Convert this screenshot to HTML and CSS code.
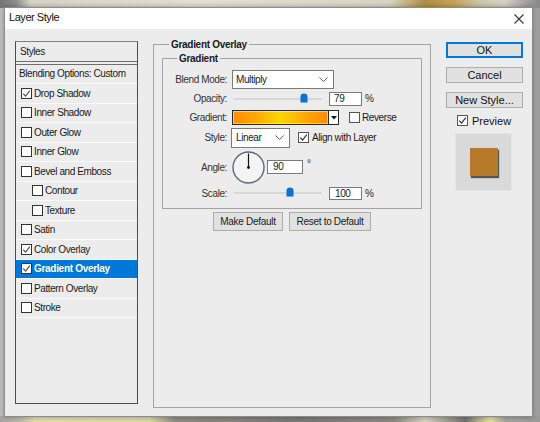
FILE: index.html
```html
<!DOCTYPE html>
<html>
<head>
<meta charset="utf-8">
<link rel="stylesheet" href="styles.css">
</head>
<body>
<div class="dialog">
  <div class="titlebar">
    <span class="title">Layer Style</span>
    <svg class="close" width="10" height="10" viewBox="0 0 10 10"><path d="M0.5 0.5 L9.5 9.5 M9.5 0.5 L0.5 9.5" stroke="#333" stroke-width="1.1" fill="none"/></svg>
  </div>
  <div class="body">
    <div class="styles-list">
      <div class="list-head">Styles</div>
      <div class="list-blend">Blending Options: Custom</div>
      <div class="list-item"><span class="cb"><svg width="9" height="9" viewBox="0 0 9 9"><polyline points="1.2,4.6 3.6,7 7.8,1.6" fill="none" stroke="#555" stroke-width="1.2"/></svg></span>Drop Shadow</div>
      <div class="list-item"><span class="cb"></span>Inner Shadow</div>
      <div class="list-item"><span class="cb"></span>Outer Glow</div>
      <div class="list-item"><span class="cb"></span>Inner Glow</div>
      <div class="list-item"><span class="cb"></span>Bevel and Emboss</div>
      <div class="list-item sub"><span class="cb"></span>Contour</div>
      <div class="list-item sub"><span class="cb"></span>Texture</div>
      <div class="list-item"><span class="cb"></span>Satin</div>
      <div class="list-item"><span class="cb"><svg width="9" height="9" viewBox="0 0 9 9"><polyline points="1.2,4.6 3.6,7 7.8,1.6" fill="none" stroke="#555" stroke-width="1.2"/></svg></span>Color Overlay</div>
      <div class="list-item selected"><span class="cb"><svg width="9" height="9" viewBox="0 0 9 9"><polyline points="1.2,4.6 3.6,7 7.8,1.6" fill="none" stroke="#555" stroke-width="1.2"/></svg></span>Gradient Overlay</div>
      <div class="list-item"><span class="cb"></span>Pattern Overlay</div>
      <div class="list-item"><span class="cb"></span>Stroke</div>
    </div>

    <fieldset class="group outer">
      <legend>Gradient Overlay</legend>
      <fieldset class="group inner">
        <legend>Gradient</legend>
        <div class="row r19">
          <span class="label">Blend Mode:</span>
          <div class="select blend-select"><span>Multiply</span><svg width="9" height="5" viewBox="0 0 9 5"><polyline points="0.5,0.5 4.5,4.5 8.5,0.5" fill="none" stroke="#666" stroke-width="1"/></svg></div>
        </div>
        <div class="row r19">
          <span class="label">Opacity:</span>
          <div class="slider"><div class="track"></div><svg class="thumb" style="left:68px" width="8" height="10" viewBox="0 0 8 10"><path d="M0.5 3.5 Q0.5 0.5 4 0.5 Q7.5 0.5 7.5 3.5 V9.5 H0.5 Z" fill="#0a73d3"/></svg></div>
          <div class="num">79</div>
          <span class="unit">%</span>
        </div>
        <div class="row r19">
          <span class="label">Gradient:</span>
          <div class="grad"></div>
          <div class="grad-arrow"><svg width="6" height="4" viewBox="0 0 6 4"><path d="M0 0 H6 L3 3.5 Z" fill="#111"/></svg></div>
          <span class="cb cb-reverse"></span>
          <span class="cb-text">Reverse</span>
        </div>
        <div class="row r21">
          <span class="label">Style:</span>
          <div class="select style-select"><span>Linear</span><svg width="9" height="5" viewBox="0 0 9 5"><polyline points="0.5,0.5 4.5,4.5 8.5,0.5" fill="none" stroke="#666" stroke-width="1"/></svg></div>
          <span class="cb cb-align"><svg width="9" height="9" viewBox="0 0 9 9"><polyline points="1.2,4.6 3.6,7 7.8,1.6" fill="none" stroke="#333" stroke-width="1.2"/></svg></span>
          <span class="cb-text">Align with Layer</span>
        </div>
        <div class="row r38">
          <span class="label">Angle:</span>
          <svg class="dial" width="33" height="33" viewBox="0 0 33 33"><circle cx="16.5" cy="16.5" r="15.5" fill="#f4f4f4" stroke="#5d6880" stroke-width="1.4"/><line x1="16.5" y1="16.5" x2="16.5" y2="2.5" stroke="#111" stroke-width="1.2"/><circle cx="16.5" cy="16.5" r="1.4" fill="#111"/></svg>
          <div class="num angle-num">90</div>
          <span class="deg">°</span>
        </div>
        <div class="row r14">
          <span class="label">Scale:</span>
          <div class="slider"><div class="track"></div><svg class="thumb" style="left:54px" width="8" height="10" viewBox="0 0 8 10"><path d="M0.5 3.5 Q0.5 0.5 4 0.5 Q7.5 0.5 7.5 3.5 V9.5 H0.5 Z" fill="#0a73d3"/></svg></div>
          <div class="num scale-num">100</div>
          <span class="unit">%</span>
        </div>
      </fieldset>
      <div class="defaults">
        <div class="btn make">Make Default</div>
        <div class="btn reset">Reset to Default</div>
      </div>
    </fieldset>

    <div class="side">
      <div class="sbtn ok">OK</div>
      <div class="sbtn">Cancel</div>
      <div class="sbtn">New Style...</div>
      <div class="preview-row"><span class="cb"><svg width="9" height="9" viewBox="0 0 9 9"><polyline points="1.2,4.6 3.6,7 7.8,1.6" fill="none" stroke="#333" stroke-width="1.2"/></svg></span><span>Preview</span></div>
      <div class="swatch"><div class="swatch-fill"></div></div>
    </div>
  </div>
</div>
</body>
</html>
```
FILE: styles.css
```css
html, body {
  margin: 0;
  padding: 0;
}
body {
  width: 540px;
  height: 422px;
  overflow: hidden;
  font-family: "Liberation Sans", Arial, sans-serif;
  background:
    linear-gradient(to right, #767676 0, #8e8e8e 16px, #d6d2c6 30px, #e2ded2 200px, #d9d4c4 390px, #b08f45 425px, #c4a45c 455px, #cfc6aa 480px, #d6d2c8 505px, #9a9a9a 530px, #888 540px) top left / 540px 8px no-repeat,
    linear-gradient(to right, #a6a6a6 0, #b9b7a8 18px, #e3dca8 35px, #ddd6a6 150px, #8e8c82 175px, #7a7a76 300px, #8c8a82 395px, #d8d3bc 425px, #727272 465px, #e7e19e 490px, #a6a6a0 505px, #9a9a9a 540px) bottom left / 540px 6px no-repeat,
    linear-gradient(to right, #c0c0c0 0, #c6c6c6 6px, #a8a8a8 534px, #9c9c9c 540px);
}

.dialog {
  margin: 7px 0 0 4px;
  width: 529px;
  height: 410px;
  box-sizing: border-box;
  border: 1px solid #8c8c8c;
  background: #ececec;
  box-shadow: 0 0 5px rgba(0, 0, 0, 0.35);
  display: flex;
  flex-direction: column;
}

.titlebar {
  height: 21px;
  box-sizing: border-box;
  padding: 0 8px 3px 4px;
  background: #fff;
  display: flex;
  align-items: center;
  justify-content: space-between;
  flex: none;
}
.title {
  font-size: 11px;
  letter-spacing: -0.45px;
  color: #111;
}
.close {
  display: block;
  margin-top: 3px;
}

.body {
  display: flex;
  align-items: flex-start;
  padding: 12px 0 0 10px;
}

/* Styles list */
.styles-list {
  width: 123px;
  height: 363px;
  box-sizing: border-box;
  border: 1px solid #4d4d4d;
  border-top-color: #808080;
  font-size: 10px;
  letter-spacing: -0.4px;
  color: #1a1a1a;
  flex: none;
}
.list-head {
  height: 19px;
  line-height: 19px;
  padding-left: 4px;
  border-bottom: 4px double #6e6e6e;
}
.list-blend {
  height: 18px;
  line-height: 18px;
  padding-left: 3px;
  border-bottom: 1px solid #fafafa;
}
.list-item {
  height: 18.5px;
  border-bottom: 1px solid #fafafa;
  display: flex;
  align-items: center;
  padding-left: 5px;
  gap: 2px;
}
.list-item.sub {
  padding-left: 16px;
}
.list-item.selected {
  background: #0078d7;
  color: #fff;
  font-weight: bold;
  letter-spacing: -0.3px;
}

.cb {
  width: 11px;
  height: 11px;
  box-sizing: border-box;
  border: 1px solid #333;
  background: #fff;
  display: inline-flex;
  align-items: center;
  justify-content: center;
  flex: none;
}
.cb svg {
  display: block;
}

/* Group boxes */
.group {
  margin: 0;
  border: 1px solid #a3a3a3;
  min-width: 0;
  box-sizing: border-box;
}
.group legend {
  font-size: 10px;
  font-weight: bold;
  letter-spacing: -0.3px;
  line-height: 13px;
  padding: 0 2px;
  color: #1a1a1a;
}
.outer {
  margin-left: 15px;
  margin-top: -3px;
  width: 278px;
  height: 370px;
  padding: 1px 8px 0 8px;
  flex: none;
}
.outer > legend {
  margin-left: 7px;
}
.inner {
  padding: 5px 0 8px 0;
}
.inner > legend {
  margin-left: 14px;
}

.row {
  display: flex;
  align-items: center;
  font-size: 10px;
  letter-spacing: -0.4px;
  color: #2a2a2a;
}
.r19 { height: 19px; }
.r21 { height: 21px; }
.r38 { height: 38px; }
.r14 { height: 14px; }

.label {
  width: 64px;
  margin-right: 5px;
  text-align: right;
  flex: none;
  color: #333;
}

.select {
  box-sizing: border-box;
  border: 1px solid #7a7a7a;
  background: #fff;
  display: flex;
  align-items: center;
  justify-content: space-between;
  padding: 0 5px 0 3px;
  color: #1a1a1a;
}
.select svg {
  display: block;
}
.blend-select {
  width: 102px;
  height: 19px;
}
.style-select {
  width: 59px;
  height: 20px;
  margin-left: -1px;
  padding-left: 4px;
}

.slider {
  position: relative;
  width: 90px;
  height: 14px;
  flex: none;
}
.track {
  margin: 6px 0 0 2px;
  width: 88px;
  height: 2px;
  background: #d8d8d8;
}
.thumb {
  position: absolute;
  top: 1px;
  display: block;
}

.num {
  box-sizing: border-box;
  width: 33px;
  height: 14px;
  margin-left: 7px;
  border: 1px solid #7a7a7a;
  background: #fff;
  line-height: 12px;
  padding-left: 4px;
  color: #1a1a1a;
}
.scale-num {
  height: 13px;
  line-height: 11px;
  padding-left: 5px;
}
.angle-num {
  width: 36px;
  margin-left: 2px;
  padding-left: 5px;
}
.unit {
  margin-left: 3px;
}
.deg {
  margin-left: 4px;
  margin-bottom: 7px;
}

.grad {
  box-sizing: border-box;
  width: 97px;
  height: 15px;
  border: 1px solid #2a2a2a;
  background: linear-gradient(to right, #ff8c00 0%, #ffaa00 25%, #ffd500 50%, #ffaa00 75%, #ff8a00 100%);
  box-shadow: inset 0 0 0 1px #ffffff80;
}
.grad-arrow {
  box-sizing: border-box;
  width: 10px;
  height: 15px;
  border: 1px solid #2a2a2a;
  border-left: none;
  background: #fff;
  display: flex;
  align-items: center;
  justify-content: center;
}
.grad-arrow svg {
  display: block;
}
.cb-reverse {
  margin-left: 10px;
  border-color: #555;
}
.cb-align {
  margin-left: 8px;
  border-color: #555;
}
.cb-text {
  margin-left: 2px;
  color: #1a1a1a;
}
.cb-align + .cb-text {
  margin-left: 3px;
}

.dial {
  display: block;
  flex: none;
}

.defaults {
  display: flex;
  justify-content: center;
  gap: 6px;
  margin-top: 3px;
}
.btn {
  box-sizing: border-box;
  height: 19px;
  border: 1px solid #adadad;
  background: #e1e1e1;
  font-size: 10px;
  letter-spacing: -0.3px;
  line-height: 17px;
  text-align: center;
  color: #1a1a1a;
}
.make { width: 70px; }
.reset { width: 82px; }

/* Right side */
.side {
  margin-left: 15px;
  margin-top: 1px;
  width: 77px;
  flex: none;
  display: flex;
  flex-direction: column;
}
.sbtn {
  box-sizing: border-box;
  height: 16px;
  border: 1px solid #adadad;
  background: #e1e1e1;
  font-size: 11px;
  line-height: 14px;
  text-align: center;
  color: #111;
  margin-bottom: 9px;
}
.sbtn.ok {
  border: 2px solid #0078d7;
  line-height: 12px;
}
.preview-row {
  display: flex;
  align-items: center;
  gap: 4px;
  height: 11px;
  margin-top: -2px;
  padding-left: 11px;
  font-size: 11px;
  color: #111;
}
.preview-row .cb {
  border-color: #555;
}
.swatch {
  margin: 7px 0 0 9px;
  width: 57px;
  height: 58px;
  box-sizing: border-box;
  border: 1px solid #e4e4e4;
  background: #d9d9d9;
  display: flex;
  align-items: center;
  justify-content: center;
}
.swatch-fill {
  width: 28px;
  height: 28px;
  background: #b7792a;
  box-shadow: 1px 2px 1px rgba(40, 40, 40, 0.75);
}
```
